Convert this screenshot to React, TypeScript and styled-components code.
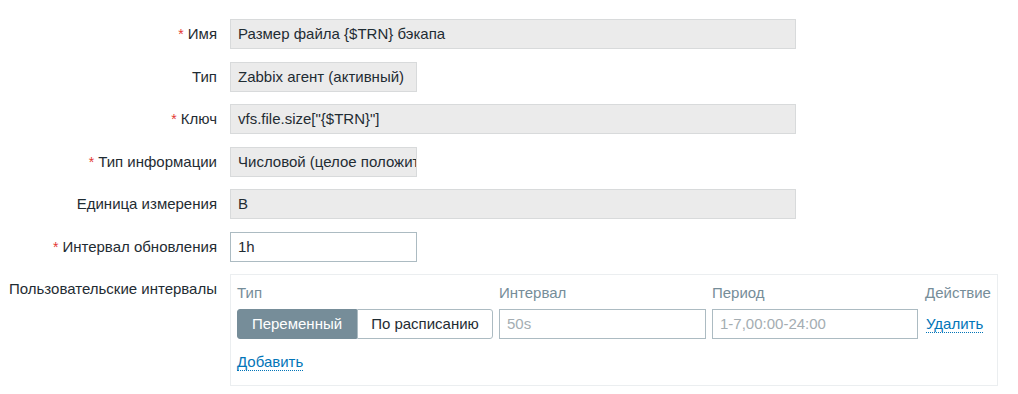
import React from 'react';
import styled, { createGlobalStyle } from 'styled-components';

const GlobalStyle = createGlobalStyle`
  html, body {
    margin: 0;
    padding: 0;
    background: #ffffff;
  }
  body {
    font-family: 'Liberation Sans', Arial, sans-serif;
    font-size: 15px;
    color: #1f2c33;
  }
`;

const Form = styled.div`
  display: grid;
  grid-template-columns: 209px 1fr;
  column-gap: 13px;
  row-gap: 12.5px;
  padding: 19px 20px 0 8px;
  width: 1018px;
  box-sizing: border-box;
`;

const Label = styled.div`
  text-align: right;
  line-height: 30px;
  white-space: nowrap;
  color: #1f2c33;
`;

const Asterisk = styled.span`
  color: #e33734;
  margin-right: 4px;
  font-size: 14px;
`;

const Field = styled.div<{ $width?: number; $readonly?: boolean }>`
  box-sizing: border-box;
  width: ${(p) => (p.$width ? `${p.$width}px` : '566px')};
  height: 30px;
  line-height: 28px;
  padding: 0 7px;
  border: 1px solid ${(p) => (p.$readonly ? '#d8dadb' : '#acbbc2')};
  background: ${(p) => (p.$readonly ? '#ebebeb' : '#ffffff')};
  color: #1f2c33;
  white-space: nowrap;
  overflow: hidden;
`;

const IntervalsBox = styled.div`
  box-sizing: border-box;
  width: 768px;
  height: 112px;
  border: 1px solid #ebeef0;
  padding: 0 6px;
  display: grid;
  grid-template-columns: 256px 207px 206px auto;
  grid-template-rows: 34px 30px auto;
  column-gap: 6px;
  align-content: start;
`;

const HeadCell = styled.div<{ $shift?: number }>`
  color: #768d99;
  padding-top: 9px;
  line-height: 18px;
  padding-left: ${(p) => p.$shift ?? 0}px;
  white-space: nowrap;
`;

const Segmented = styled.div`
  display: flex;
  height: 30px;
`;

const SegButton = styled.div<{ $active?: boolean }>`
  box-sizing: border-box;
  height: 30px;
  line-height: 28px;
  text-align: center;
  white-space: nowrap;
  border: 1px solid ${(p) => (p.$active ? '#768d99' : '#acbbc2')};
  background: ${(p) => (p.$active ? '#768d99' : '#ffffff')};
  color: ${(p) => (p.$active ? '#ffffff' : '#1f2c33')};
  border-radius: ${(p) => (p.$active ? '3px 0 0 3px' : '0 3px 3px 0')};
  width: ${(p) => (p.$active ? '120px' : '136px')};
`;

const TextBox = styled.div`
  box-sizing: border-box;
  height: 30px;
  line-height: 28px;
  padding: 0 7px;
  border: 1px solid #acbbc2;
  background: #ffffff;
  color: #a4adb2;
  white-space: nowrap;
`;

const Link = styled.a<{ $shift?: number }>`
  align-self: center;
  justify-self: start;
  color: #0275b8;
  text-decoration: none;
  border-bottom: 1px dotted #0275b8;
  line-height: 17px;
  margin-left: ${(p) => p.$shift ?? 0}px;
  cursor: pointer;
`;

const AddRow = styled.div`
  grid-column: 1 / -1;
  padding-top: 14px;
  line-height: 17px;
`;

type Row = { label: string; required?: boolean; value: string; width?: number; readonly?: boolean };

const rows: Row[] = [
  { label: 'Имя', required: true, value: 'Размер файла {$TRN} бэкапа', readonly: true },
  { label: 'Тип', value: 'Zabbix агент (активный)', width: 187, readonly: true },
  { label: 'Ключ', required: true, value: 'vfs.file.size["{$TRN}"]', readonly: true },
  { label: 'Тип информации', required: true, value: 'Числовой (целое положительное)', width: 187, readonly: true },
  { label: 'Единица измерения', value: 'B', readonly: true },
  { label: 'Интервал обновления', required: true, value: '1h', width: 187 },
];

const App: React.FC = () => {
  return (
    <>
      <GlobalStyle />
      <Form>
        {rows.map((r) => (
          <React.Fragment key={r.label}>
            <Label>
              {r.required && <Asterisk>*</Asterisk>}
              {r.label}
            </Label>
            <Field $width={r.width} $readonly={r.readonly}>
              {r.value}
            </Field>
          </React.Fragment>
        ))}
        <Label>Пользовательские интервалы</Label>
        <IntervalsBox>
          <HeadCell>Тип</HeadCell>
          <HeadCell>Интервал</HeadCell>
          <HeadCell>Период</HeadCell>
          <HeadCell $shift={1}>Действие</HeadCell>
          <Segmented>
            <SegButton $active>Переменный</SegButton>
            <SegButton>По расписанию</SegButton>
          </Segmented>
          <TextBox>50s</TextBox>
          <TextBox>1-7,00:00-24:00</TextBox>
          <Link $shift={2}>Удалить</Link>
          <AddRow>
            <Link>Добавить</Link>
          </AddRow>
        </IntervalsBox>
      </Form>
    </>
  );
};

export default App;
